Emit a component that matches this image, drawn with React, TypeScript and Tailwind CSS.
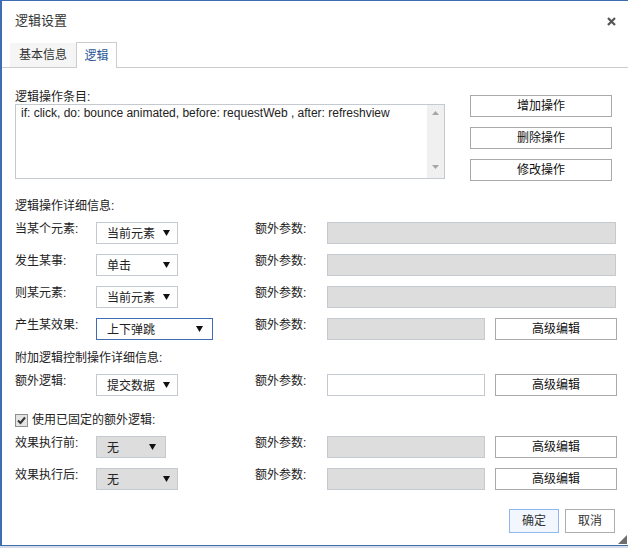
import React from 'react'

const Arrow = () => (
  <svg width="7" height="6" viewBox="0 0 7 6">
    <path d="M0 0H7L3.5 6Z" fill="#111" />
  </svg>
)

function Select({ text, className }: { text: string; className: string }) {
  return (
    <div className={`h-[22px] flex items-center justify-between pl-[10px] pr-[7px] border ${className}`}>
      <span className="leading-[14px] pt-[1px]">{text}</span>
      <Arrow />
    </div>
  )
}

function Btn({ text, className = '' }: { text: string; className?: string }) {
  return (
    <div className={`h-[22px] border border-[#a9a9a9] bg-white flex items-center justify-center text-[#111] ${className}`}>
      {text}
    </div>
  )
}

type RowProps = {
  label: string
  select: React.ReactNode
  input: 'full' | 'half'
  gray?: boolean
}

function Row({ label, select, input, gray = true }: RowProps) {
  return (
    <div className="flex items-start h-[22px]">
      <div className="w-[81px] leading-[14px]">{label}</div>
      <div className="w-[159px]">{select}</div>
      <div className="w-[72px] leading-[14px]">额外参数:</div>
      {input === 'full' ? (
        <div className="flex-1 h-[22px] mr-[1px] border border-[#c5cad0] bg-[#dddddd]" />
      ) : (
        <>
          <div
            className={`w-[158px] h-[22px] border border-[#c5cad0] ${gray ? 'bg-[#dddddd]' : 'bg-white'}`}
          />
          <Btn text="高级编辑" className="w-[122px] ml-[10px]" />
        </>
      )}
    </div>
  )
}

export default function App() {
  return (
    <div className="w-[628px] h-[548px] bg-[#d5dce7] overflow-hidden text-[12px] text-[#222] font-['Liberation_Sans','Noto_Sans_CJK_SC',sans-serif]">
      <div className="relative h-[546px] bg-white border-l-2 border-t border-b border-[#3e6db2]">
        {/* title bar */}
        <div className="h-[40px] flex items-center justify-between pl-[13px] pr-[12px]">
          <span className="text-[13px] text-[#333]">逻辑设置</span>
          <svg width="9" height="9" viewBox="0 0 9 9">
            <path d="M1 1L8 8M8 1L1 8" stroke="#555" strokeWidth="2.2" />
          </svg>
        </div>

        {/* tabs */}
        <div className="h-[27px] flex items-end border-b border-[#cccccc]">
          <div className="ml-[8px] h-[24px] w-[66px] bg-[#f5f5f5] flex items-center justify-center text-[#333]">
            基本信息
          </div>
          <div className="h-[26px] w-[41px] -mb-px bg-white border-x border-t border-[#cccccc] flex items-center justify-center text-[#2b5797]">
            逻辑
          </div>
        </div>

        <div className="pl-[13px] pr-[11px]">
          {/* operations list */}
          <div className="flex justify-between mt-[22px]">
            <div className="w-[430px]">
              <div className="leading-[14px]">逻辑操作条目:</div>
              <div className="h-[75px] border border-[#c5cad0] flex">
                <div className="flex-1 pl-[5px] leading-[16px] font-['Liberation_Sans',sans-serif] text-[#222]">
                  if: click, do: bounce animated, before: requestWeb , after: refreshview
                </div>
                <div className="w-[17px] bg-[#f0f0f0] flex flex-col items-center justify-between pt-[6px] pb-[9px]">
                  <svg width="7" height="4" viewBox="0 0 7 4">
                    <path d="M0 4H7L3.5 0Z" fill="#a6a6a6" />
                  </svg>
                  <svg width="7" height="4" viewBox="0 0 7 4">
                    <path d="M0 0H7L3.5 4Z" fill="#a6a6a6" />
                  </svg>
                </div>
              </div>
            </div>
            <div className="flex flex-col gap-[10px] mt-[5px] mr-[5px]">
              <Btn text="增加操作" className="w-[142px]" />
              <Btn text="删除操作" className="w-[142px]" />
              <Btn text="修改操作" className="w-[142px]" />
            </div>
          </div>

          <div className="mt-[18px] leading-[14px]">逻辑操作详细信息:</div>
          <div className="mt-[9px] flex flex-col gap-[10px]">
            <Row
              label="当某个元素:"
              select={<Select text="当前元素" className="w-[82px] bg-white border-[#c5cad0]" />}
              input="full"
            />
            <Row
              label="发生某事:"
              select={<Select text="单击" className="w-[82px] bg-white border-[#c5cad0]" />}
              input="full"
            />
            <Row
              label="则某元素:"
              select={<Select text="当前元素" className="w-[82px] bg-white border-[#c5cad0]" />}
              input="full"
            />
            <Row
              label="产生某效果:"
              select={<Select text="上下弹跳" className="w-[117px] bg-white border-[#3e6db2] pr-[9px]" />}
              input="half"
            />
          </div>

          <div className="mt-[11px] leading-[14px]">附加逻辑控制操作详细信息:</div>
          <div className="mt-[9px]">
            <Row
              label="额外逻辑:"
              select={<Select text="提交数据" className="w-[82px] bg-white border-[#c5cad0]" />}
              input="half"
              gray={false}
            />
          </div>

          <div className="mt-[17px] h-[14px] flex items-center gap-[4px]">
            <svg width="13" height="13" viewBox="0 0 13 13">
              <rect x="0.5" y="0.5" width="12" height="12" fill="#e4e4e4" stroke="#8f8f8f" />
              <path d="M3 6.5L5.5 9L10 3.5" fill="none" stroke="#333" strokeWidth="2" />
            </svg>
            <span className="leading-[14px]">使用已固定的额外逻辑:</span>
          </div>

          <div className="mt-[9px] flex flex-col gap-[10px]">
            <Row
              label="效果执行前:"
              select={<Select text="无" className="w-[70px] bg-[#dddddd] border-[#c5cad0] pr-[9px]" />}
              input="half"
            />
            <Row
              label="效果执行后:"
              select={<Select text="无" className="w-[82px] bg-[#dddddd] border-[#c5cad0]" />}
              input="half"
            />
          </div>

          {/* footer */}
          <div className="mt-[19px] flex justify-end gap-[6px] pr-[2px]">
            <div className="w-[50px] h-[24px] border border-[#90b8f0] bg-[#f2f7ff] flex items-center justify-center text-[#333]">
              确定
            </div>
            <div className="w-[50px] h-[24px] border border-[#adadad] bg-white flex items-center justify-center text-[#333]">
              取消
            </div>
          </div>
        </div>

        {/* resize grip */}
        <svg className="absolute right-[1px] bottom-[1px]" width="9" height="9" viewBox="0 0 9 9">
          <path d="M9 0V9H0Z" fill="#6e6e6e" />
        </svg>
      </div>
    </div>
  )
}
